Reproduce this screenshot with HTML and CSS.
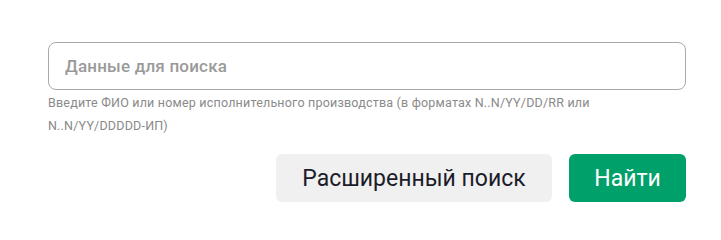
FILE: index.html
```html
<!DOCTYPE html>
<html lang="ru">
<head>
<meta charset="utf-8">
<link rel="stylesheet" href="styles.css">
</head>
<body>
<form class="search">
  <input class="search-input" type="text" placeholder="Данные для поиска">
  <p class="hint">Введите ФИО или номер исполнительного производства (в форматах N..N/YY/DD/RR или N..N/YY/DDDDD-ИП)</p>
  <div class="actions">
    <button type="button" class="btn btn-secondary">Расширенный поиск</button>
    <button type="button" class="btn btn-primary">Найти</button>
  </div>
</form>
</body>
</html>
```
FILE: styles.css
```css
html, body {
  margin: 0;
  padding: 0;
  background: #ffffff;
}
body {
  font-family: Roboto, "Liberation Sans", sans-serif;
}
.search {
  width: 638px;
  padding: 42px 0 0 48px;
  display: flex;
  flex-direction: column;
}
.search-input {
  box-sizing: border-box;
  width: 100%;
  height: 48px;
  border: 1px solid #a9a9a9;
  border-radius: 8px;
  padding: 0 16px;
  font-family: Roboto, "Liberation Sans", sans-serif;
  font-size: 17px;
  font-weight: 500;
  letter-spacing: 0.2px;
  color: #333;
  outline: none;
}
.search-input::placeholder {
  color: #9a9a9a;
}
.hint {
  margin: 1px 0 0 0;
  font-size: 12.5px;
  letter-spacing: 0.2px;
  line-height: 23px;
  color: #8a8a8a;
}
.actions {
  display: flex;
  justify-content: flex-end;
  gap: 17px;
  margin-top: 17px;
}
.btn {
  height: 48px;
  border: none;
  border-radius: 6px;
  font-family: Roboto, "Liberation Sans", sans-serif;
  font-size: 23px;
  cursor: pointer;
}
.btn-secondary {
  width: 276px;
  background: #eff0ef;
  color: #1c1c2a;
}
.btn-primary {
  width: 117px;
  background: #00a06a;
  color: #ffffff;
}
```
